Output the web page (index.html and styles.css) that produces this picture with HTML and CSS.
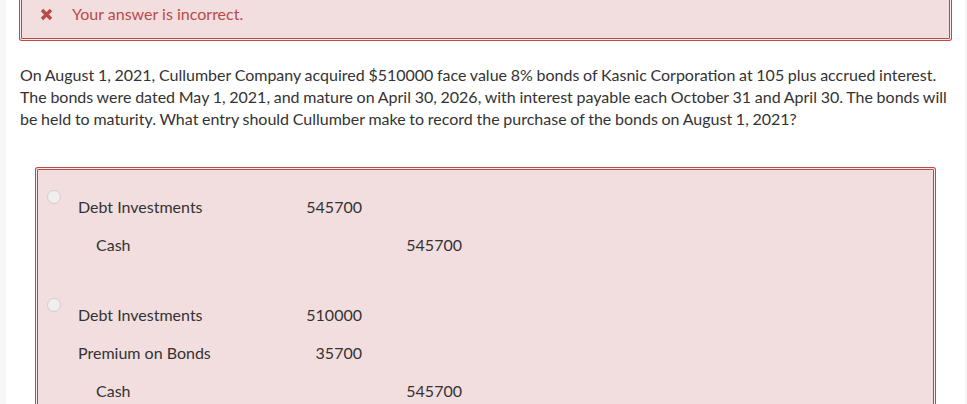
FILE: index.html
```html
<!DOCTYPE html>
<html lang="en">
<head>
<meta charset="utf-8">
<title>Question</title>
<link rel="stylesheet" href="styles.css">
</head>
<body>
<div class="page">
  <div class="alert">
    <svg class="alert-icon" width="13" height="13" viewBox="0 0 13 13" aria-hidden="true"><path d="M2 2 L11 11 M11 2 L2 11" stroke="#b94a48" stroke-width="3.4" stroke-linecap="butt"/></svg>
    <span class="alert-text">Your answer is incorrect.</span>
  </div>
  <p class="question">On August 1, 2021, Cullumber Company acquired $510000 face value 8% bonds of Kasnic Corporation at 105 plus accrued interest. The bonds were dated May 1, 2021, and mature on April 30, 2026, with interest payable each October 31 and April 30. The bonds will be held to maturity. What entry should Cullumber make to record the purchase of the bonds on August 1, 2021?</p>
  <div class="answers">
    <div class="option">
      <span class="radio"></span>
      <div class="entry">
        <div class="acct">Debt Investments</div><div class="dr">545700</div><div class="cr"></div>
        <div class="acct credit">Cash</div><div class="dr"></div><div class="cr">545700</div>
      </div>
    </div>
    <div class="option">
      <span class="radio"></span>
      <div class="entry">
        <div class="acct">Debt Investments</div><div class="dr">510000</div><div class="cr"></div>
        <div class="acct">Premium on Bonds</div><div class="dr">35700</div><div class="cr"></div>
        <div class="acct credit">Cash</div><div class="dr"></div><div class="cr">545700</div>
      </div>
    </div>
  </div>
</div>
</body>
</html>
```

FILE: styles.css
```css
html, body {
  margin: 0;
  padding: 0;
  height: 100%;
  overflow: hidden;
}
body {
  background: #f7f7f7;
  font-family: Lato, "Open Sans", sans-serif;
  color: #333;
}
.page {
  background: #fff;
  margin: 0 2px 0 6px;
  min-height: 100%;
  padding-top: 1px;
  box-sizing: border-box;
}
.alert {
  margin: -10px 15px 0 15px;
  height: 48px;
  box-sizing: border-box;
  background: #f2dede;
  border: 1px solid #b94a48;
  box-shadow: 0 0 0 1px #f7eaea, 0 0 0 2px #b94a48;
  border-radius: 1px;
  padding: 12px 0 0 18px;
  display: flex;
  align-items: flex-start;
}
.alert-icon {
  flex: none;
  margin-top: 4px;
}
.alert-text {
  color: #b94a48;
  font-size: 16px;
  line-height: 20px;
  margin-left: 19px;
}
.question {
  margin: 25px 12px 0 14px;
  font-size: 16px;
  line-height: 22px;
  word-spacing: -0.4px;
  color: #333;
}
.answers {
  margin: 39px 31px 0 31px;
  background: #f2dede;
  border: 1px solid #b94a48;
  box-shadow: 0 0 0 1px #f7eaea, 0 0 0 2px #b94a48;
  border-radius: 1px;
}
.option {
  display: flex;
  padding: 17px 0 16px 0;
}
.option + .option {
  padding-top: 16px;
}
.radio {
  flex: none;
  width: 12px;
  height: 12px;
  border: 1px solid #cfcfcf;
  border-radius: 50%;
  background: #f1eeef;
  margin: 3px 0 0 9px;
}
.entry {
  margin-left: 17px;
  display: grid;
  grid-template-columns: 200px 84px 100px;
  grid-auto-rows: 38px;
  font-size: 16px;
  color: #333;
}
.entry > div {
  display: flex;
  align-items: center;
}
.acct.credit {
  padding-left: 18px;
}
.dr, .cr {
  justify-content: flex-end;
}
```
